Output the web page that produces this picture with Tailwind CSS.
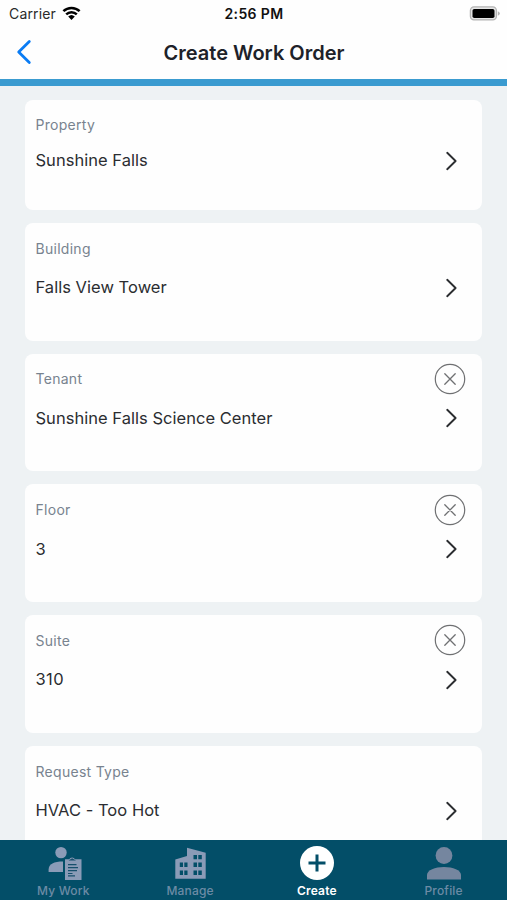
<!DOCTYPE html>
<html lang="en">
<head>
<meta charset="utf-8">
<title>Create Work Order</title>
<script src="https://cdn.jsdelivr.net/npm/@tailwindcss/browser@4"></script>
</head>
<body class="w-[507px] h-[900px] overflow-hidden bg-[#eef2f4] font-['Inter','Liberation_Sans',sans-serif]">
<svg class="hidden">
  <symbol id="chev" viewBox="0 0 14 20"><path d="M2.2 1.8 10.6 10 2.2 18.2" fill="none" stroke="#2b2d30" stroke-width="1.9" stroke-linecap="round" stroke-linejoin="round"/></symbol>
  <symbol id="clear" viewBox="0 0 32 32"><circle cx="16" cy="16" r="14.7" fill="none" stroke="#6f7072" stroke-width="1.2"/><path d="M10.8 10.8 21.2 21.2M21.2 10.8 10.8 21.2" fill="none" stroke="#6f7072" stroke-width="1.3" stroke-linecap="round"/></symbol>
</svg>
<div class="flex flex-col h-full">
  <header class="bg-[#fefefe] h-[86px] shrink-0 border-b-[7px] border-[#3a9bd0] flex flex-col">
    <div class="grid grid-cols-3 items-center h-[27px] pl-[9px] pr-[7px] text-black">
      <div class="flex items-center gap-[6px] text-[14px] tracking-[0.15px] text-[#2a2a2a]">Carrier
        <svg class="w-[19px] h-[15px] -mt-[1px]" viewBox="0 0 19 15"><path d="M1.4 5.2a11.6 11.6 0 0 1 16.2 0M4.2 8.3a7.6 7.6 0 0 1 10.6 0" fill="none" stroke="#000" stroke-width="2.5"/><path d="M6.2 10.6a4.8 4.8 0 0 1 6.6 0L9.5 14z"/></svg>
      </div>
      <div class="text-center text-[14px] tracking-[0.35px] -ml-[1px] font-semibold text-[#111]">2:56 PM</div>
      <svg class="w-[31px] h-[15px] justify-self-end" viewBox="0 0 31 15"><rect x="1.400" y=".9" width="26" height="13" rx="3.6" fill="#e6e6e6" stroke="#b3b3b3" stroke-width="1.3"/><rect x="3.500" y="3" width="22" height="9" rx="1.8"/><path d="M28.8 5.2q2 .7 2 2.3t-2 2.3z" fill="#b3b3b3"/></svg>
    </div>
    <div class="grid grid-cols-[80px_1fr_80px] items-center h-[50px]">
      <svg class="w-4 h-[26px] ml-4" viewBox="0 0 16 26"><path d="M13.3 2.5 2.7 13 13.3 23.5" fill="none" stroke="#0a7cf4" stroke-width="2.8" stroke-linecap="round" stroke-linejoin="round"/></svg>
      <h1 class="text-center text-[20px] font-semibold pl-[1px] pt-[1px] text-[#1d2229]">Create Work Order</h1>
    </div>
  </header>
  <main class="flex-1 min-h-0 overflow-hidden flex flex-col gap-[13px] pt-[14px] pl-[25px] pr-[25px] text-[#2b2d31] text-[16.5px] tracking-[0.03px]">
    <section class="shrink-0 h-[110px] rounded-[8px] bg-[#fefefe] pt-[9.500px] pl-[10.5px] pr-[16.5px]">
      <div class="flex items-center h-[30px] text-[14px] tracking-[0.28px] text-[#78838f]">Property</div>
      <div class="flex items-center justify-between h-[42px]"><span>Sunshine Falls</span><svg class="w-[14px] h-5 mr-[7px]"><use href="#chev"/></svg></div>
    </section>
    <section class="shrink-0 h-[117.7px] rounded-[8px] bg-[#fefefe] pt-[10px] pl-[10.5px] pr-[16.5px]">
      <div class="flex items-center h-[30px] text-[14px] tracking-[0.28px] text-[#78838f]">Building</div>
      <div class="flex items-center justify-between h-[49px]"><span>Falls View Tower</span><svg class="w-[14px] h-5 mr-[7px]"><use href="#chev"/></svg></div>
    </section>
    <section class="shrink-0 h-[117.7px] rounded-[8px] bg-[#fefefe] pt-[10.300px] pl-[10.5px] pr-[16.5px]">
      <div class="flex items-center justify-between h-[30px] text-[14px] tracking-[0.28px] text-[#78838f]">Tenant<svg class="w-8 h-8"><use href="#clear"/></svg></div>
      <div class="flex items-center justify-between h-[49px]"><span>Sunshine Falls Science Center</span><svg class="w-[14px] h-5 mr-[7px]"><use href="#chev"/></svg></div>
    </section>
    <section class="shrink-0 h-[117.7px] rounded-[8px] bg-[#fefefe] pt-[10.300px] pl-[10.5px] pr-[16.5px]">
      <div class="flex items-center justify-between h-[30px] text-[14px] tracking-[0.28px] text-[#78838f]">Floor<svg class="w-8 h-8"><use href="#clear"/></svg></div>
      <div class="flex items-center justify-between h-[49px]"><span>3</span><svg class="w-[14px] h-5 mr-[7px]"><use href="#chev"/></svg></div>
    </section>
    <section class="shrink-0 h-[117.7px] rounded-[8px] bg-[#fefefe] pt-[10px] pl-[10.5px] pr-[16.5px]">
      <div class="flex items-center justify-between h-[30px] text-[14px] tracking-[0.28px] text-[#78838f]">Suite<svg class="w-8 h-8"><use href="#clear"/></svg></div>
      <div class="flex items-center justify-between h-[49px]"><span class="tracking-[0.4px]">310</span><svg class="w-[14px] h-5 mr-[7px]"><use href="#chev"/></svg></div>
    </section>
    <section class="shrink-0 h-[117.7px] rounded-[8px] bg-[#fefefe] pt-[10.300px] pl-[10.5px] pr-[16.5px]">
      <div class="flex items-center h-[30px] text-[14px] tracking-[0.28px] text-[#78838f]">Request Type</div>
      <div class="flex items-center justify-between h-[49px]"><span>HVAC - Too Hot</span><svg class="w-[14px] h-5 mr-[7px]"><use href="#chev"/></svg></div>
    </section>
  </main>
  <nav class="h-[60px] shrink-0 bg-[#034e68] grid grid-cols-4 text-[12px] font-medium tracking-[0.2px] text-[#6c8ba5] leading-[16px]">
    <div class="flex flex-col items-center pt-[6px] gap-[3px]">
      <svg class="w-[34px] h-[34px] ml-[3px]" viewBox="0 0 34 34" fill="#8b9bb7"><circle cx="13" cy="6.6" r="5.7"/><path d="M.6 26v-2.500C.6 18 6 15.400 15 15.400V26z"/><path d="M17 13.200h4.200a3.300 3.300 0 0 1 5.800 0H33.500V34H17z"/><path d="M20.500 14.600 24.200 12.200 28 14.600z" fill="#174f6c"/><path d="M20 18.600h8.500M20 21.600h10M20 24.600h9M20 27.500h4.500M20 29.900h7" stroke="#174f6c" stroke-width="1.2"/></svg>
      <span>My Work</span>
    </div>
    <div class="flex flex-col items-center pt-[6px] gap-[3px]">
      <svg class="w-[34px] h-[34px] ml-[2px]" viewBox="0 0 34 34"><path d="M1.300 13.500 13 10V1.800l18.700 5V32.800H1.300z" fill="#8b9bb7"/><path d="M19.500 9h3.500v4.300H19.500zM24.300 9h3.500v4.300H24.300zM19.500 16.500h3.500V21H19.500zM24.300 16.500h3.500V21H24.300zM19.500 24.500h3.500V29H19.500zM24.300 24.500h3.500V29H24.300zM5.800 16.500H9V21H5.800zM10.300 16.500h3.200V21h-3.200zM5.800 24.500H9V29H5.800zM10.300 24.500h3.200V29h-3.200z" fill="#034e68"/></svg>
      <span>Manage</span>
    </div>
    <div class="flex flex-col items-center pt-[6px] gap-[3px] text-white font-semibold">
      <svg class="w-[34px] h-[34px]" viewBox="0 0 34 34"><circle cx="17" cy="17" r="17" fill="#fff"/><path d="M17 8.500v17M8.500 17h17" stroke="#034e68" stroke-width="3"/></svg>
      <span>Create</span>
    </div>
    <div class="flex flex-col items-center pt-[6px] gap-[3px]">
      <svg class="w-[34px] h-[34px]" viewBox="0 0 34 34" fill="#75869f"><circle cx="17" cy="9.500" r="8.400"/><path d="M0 33.500v-4.500c0-5 8-8 17-8s17 3 17 8v4.500z"/></svg>
      <span>Profile</span>
    </div>
  </nav>
</div>
</body>
</html>
